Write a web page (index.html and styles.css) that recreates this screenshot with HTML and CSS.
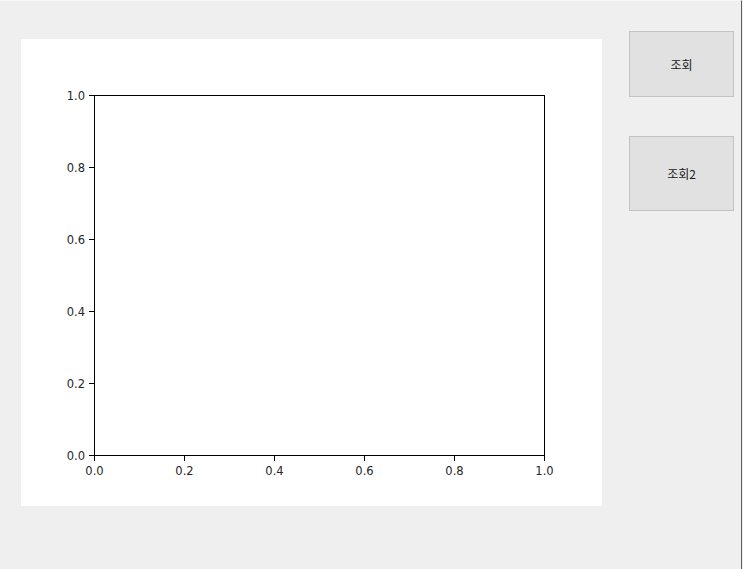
FILE: index.html
```html
<!DOCTYPE html>
<html lang="ko">
<head>
<meta charset="utf-8">
<link rel="stylesheet" href="styles.css">
</head>
<body>
<div class="window">
  <div class="canvas">
    <svg class="plot" width="581" height="467" viewBox="0 0 581 467">
      <g stroke="#000" stroke-width="1" fill="none" shape-rendering="crispEdges">
        <rect x="73.5" y="56.5" width="450" height="360"/>
        <line x1="68" y1="56.5" x2="73" y2="56.5"/>
        <line x1="68" y1="128.5" x2="73" y2="128.5"/>
        <line x1="68" y1="200.5" x2="73" y2="200.5"/>
        <line x1="68" y1="272.5" x2="73" y2="272.5"/>
        <line x1="68" y1="344.5" x2="73" y2="344.5"/>
        <line x1="68" y1="416.5" x2="73" y2="416.5"/>
        <line x1="73.5" y1="417" x2="73.5" y2="422"/>
        <line x1="163.5" y1="417" x2="163.5" y2="422"/>
        <line x1="253.5" y1="417" x2="253.5" y2="422"/>
        <line x1="343.5" y1="417" x2="343.5" y2="422"/>
        <line x1="433.5" y1="417" x2="433.5" y2="422"/>
        <line x1="523.5" y1="417" x2="523.5" y2="422"/>
      </g>
      <g class="ylab" text-anchor="end">
        <text x="64" y="61">1.0</text>
        <text x="64" y="133">0.8</text>
        <text x="64" y="205">0.6</text>
        <text x="64" y="277">0.4</text>
        <text x="64" y="349">0.2</text>
        <text x="64" y="421">0.0</text>
      </g>
      <g class="xlab" text-anchor="middle">
        <text x="73.5" y="436">0.0</text>
        <text x="163.5" y="436">0.2</text>
        <text x="253.5" y="436">0.4</text>
        <text x="343.5" y="436">0.6</text>
        <text x="433.5" y="436">0.8</text>
        <text x="523.5" y="436">1.0</text>
      </g>
    </svg>
  </div>
  <div class="side">
    <button class="btn btn-1">조회</button>
    <button class="btn btn-2">조회2</button>
  </div>
</div>
</body>
</html>
```
FILE: styles.css
```css
html, body {
  margin: 0;
  padding: 0;
  background: #efefef;
}
.window {
  width: 742px;
  height: 569px;
  box-sizing: border-box;
  border-right: 1px solid #5f5f5f;
  border-top: 1px solid #f7f7f7;
  display: flex;
  align-items: flex-start;
  background: #efefef;
}
.canvas {
  margin-left: 21px;
  margin-top: 38px;
  width: 581px;
  height: 467px;
  background: #ffffff;
}
.plot {
  display: block;
}
.plot text {
  font-family: "DejaVu Sans", sans-serif;
  font-size: 11.5px;
  fill: #262626;
}
.side {
  margin-left: 27px;
  margin-top: 30px;
  display: flex;
  flex-direction: column;
  gap: 39px;
}
.btn {
  width: 105px;
  margin: 0;
  padding: 0;
  background: #e1e1e1;
  border: 1px solid #c3c3c3;
  font-family: "Noto Sans CJK KR", "Noto Sans", sans-serif;
  font-size: 12px;
  color: #1a1a1a;
}
.btn-1 {
  height: 66px;
}
.btn-2 {
  height: 75px;
}
```
